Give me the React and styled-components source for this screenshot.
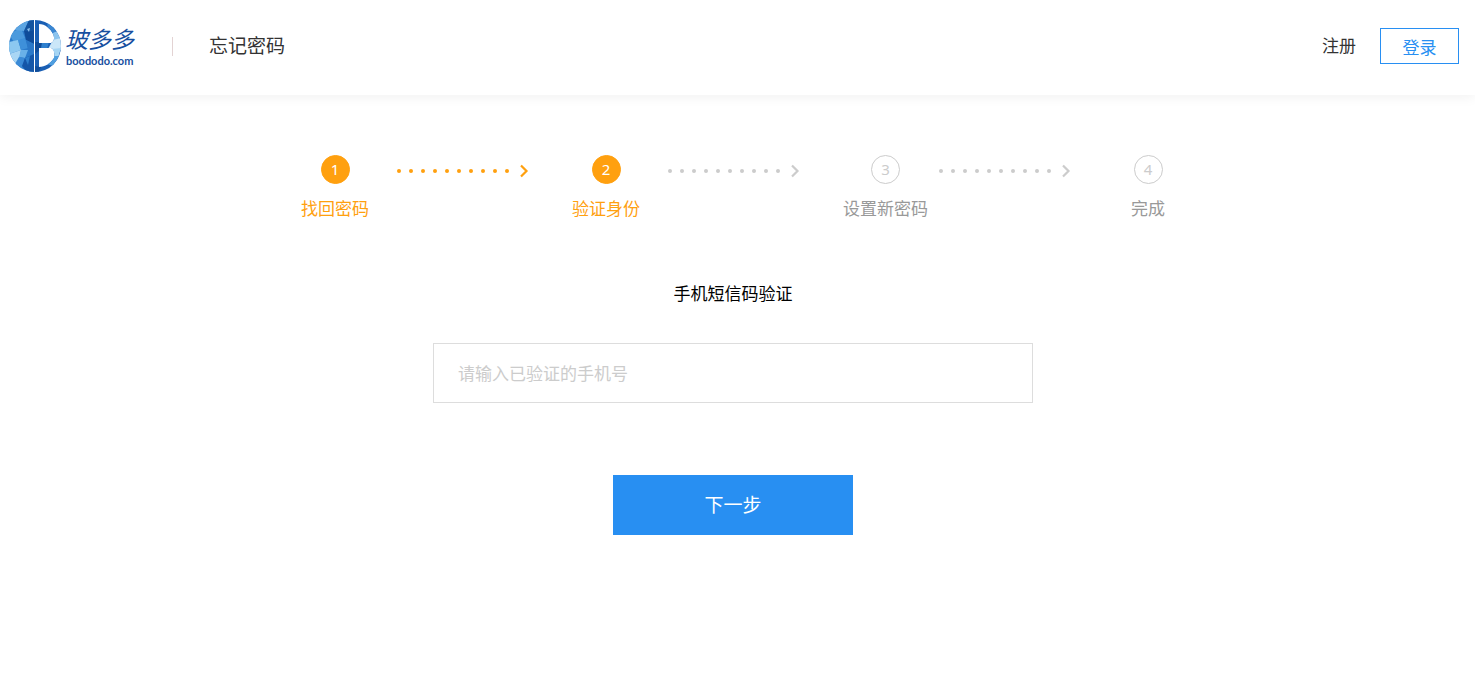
import React, { useState } from 'react'
import styled, { createGlobalStyle } from 'styled-components'


const GlobalStyle = createGlobalStyle`
    * {
        box-sizing: border-box;
    }

    body {
        margin: 0;
        background: #fff;
        color: #000;
        font-family: "Noto Sans", "Noto Sans CJK SC", sans-serif;
        font-size: 17px;
        font-weight: 400;
        line-height: 24px;
    }

    button, input {
        font: inherit;
    }
`

const Header = styled.header`
    display: flex;
    align-items: center;
    height: 95px;
    padding: 0 16px 3px 9px;
    background: #fff;
    box-shadow: 0 2px 12px rgba(0, 0, 0, 0.06);
`

const HomeLink = styled.a`
    display: flex;
`

const Title = styled.h1`
    margin: 0 auto 0 35px;
    padding-left: 37px;
    font-size: 19px;
    font-weight: 400;
    line-height: 24px;
    color: #333;
    background: linear-gradient(#e3d3d3, #e3d3d3) left center / 1px 19px no-repeat;
`

const RegisterLink = styled.a`
    margin-right: 24px;
    color: #333;
    text-decoration: none;
`

const LoginLink = styled.a`
    display: flex;
    align-items: center;
    justify-content: center;
    width: 79px;
    height: 36px;
    padding-top: 3px;
    border: 1px solid #288ff2;
    color: #288ff2;
    text-decoration: none;
`

const Main = styled.main`
    display: flex;
    flex-direction: column;
    align-items: center;
    padding: 60px 9px 0 0;
`

const Steps = styled.ol`
    display: grid;
    grid-template-columns: repeat(3, 271px) 68px;
    margin: 0;
    padding: 0 0 0 17px;
    list-style: none;
`

const StepItem = styled.li`
    display: flex;
    justify-content: space-between;
    padding-right: ${props => props.$last ? 0 : 43}px;
`

const Step = styled.div`
    display: flex;
    flex-direction: column;
    align-items: center;
    gap: 13px;
    min-width: 68px;
    white-space: nowrap;
    color: ${props => props.$active ? '#ffa00f' : '#999'};
`

const StepNumber = styled.span`
    display: flex;
    align-items: center;
    justify-content: center;
    width: 29px;
    height: 29px;
    padding-bottom: 1px;
    border: 1px solid ${props => props.$active ? '#ffa00f' : '#ccc'};
    border-radius: 50%;
    font-size: 15px;
    color: ${props => props.$active ? '#fff' : '#ccc'};
    background: ${props => props.$active ? '#ffa00f' : '#fff'};
`

const ArrowSvg = styled.svg`
    display: block;
    margin-top: 9px;
    color: ${props => props.$active ? '#ffa00f' : '#ccc'};
`

const Form = styled.form`
    display: flex;
    flex-direction: column;
    align-items: center;
    width: 100%;
    max-width: 600px;
    margin-top: 61px;
`

const PhoneLabel = styled.label`
    color: #000;
`

const PhoneInput = styled.input`
    width: 100%;
    height: 60px;
    margin-top: 37px;
    padding: 0 24px;
    border: 1px solid #ddd;
    border-radius: 0;
    outline: none;
    color: #333;

    &::placeholder {
        color: #ccc;
        opacity: 1;
    }
`

const NextButton = styled.button`
    width: 240px;
    height: 60px;
    margin-top: 72px;
    border: 0;
    font-size: 19px;
    color: #fff;
    background: #288ff2;
    cursor: pointer;
`


const Logo = () => (
    <svg width="128" height="52" viewBox="0 0 128 52" role="img" aria-label="玻多多">
        <defs>
            <clipPath id="globe">
                <circle cx="26" cy="26" r="26" />
            </clipPath>
            <clipPath id="letter">
                <path
                    clipRule="evenodd"
                    d="M26 0H52V52H26z
                       M30 4V23H42C45 22 46 18 44 14 42 9 36 4 30 4z
                       M30 28V47C36 47 42 43 45 38 46 33 45 29 42 28z"
                />
            </clipPath>
        </defs>
        <g clipPath="url(#globe)">
            <rect width="25" height="52" fill="#2b7bcb" />
            <path d="M0 14 12 8 16 18 6 24z" fill="#4b9add" />
            <path d="M0 22 9 20 12 30 0 34z" fill="#8cc8f0" />
            <path d="M9 20 16 18 19 28 12 30z" fill="#3e90da" />
            <path d="M5 10 14 2 20 0 15 11z" fill="#5ca5e2" />
            <path d="M15 11 20 0H25V10z" fill="#14549f" />
            <path d="M15 11 25 10V24L17 20z" fill="#0f4c9a" />
            <path d="M18 9 21 8 20 12z" fill="#8cc0ec" />
            <path d="M17 20 25 24V36L19 30z" fill="#2b78c8" />
            <path d="M0 34 12 30 10 42 4 44z" fill="#a9d6f4" />
            <path d="M12 30 19 30 16 38 10 37z" fill="#69b1e8" />
            <path d="M10 37 16 38 13 48 6 44z" fill="#3a8ad6" />
            <path d="M16 38 25 34V52H18L13 46z" fill="#1456a8" />
            <path d="M16 38 21 36 19 45z" fill="#2e80ce" />
            <g clipPath="url(#letter)">
                <rect x="26" width="26" height="52" fill="#1a5fb4" />
                <path d="M26 22 34 22 31 30 26 34z" fill="#0f4c9a" />
                <path d="M33 22 40 22 38 29 32 29z" fill="#2f80ce" />
                <path d="M38 2 47 8 46 15 39 9z" fill="#3a86d2" />
                <path d="M42 14 50 10 52 20 44 22z" fill="#8cc4ee" />
                <path d="M39 29 44 20 52 18V30L46 33z" fill="#cbe7f9" />
                <path d="M43 29 52 28 49 38 44 38z" fill="#a5d5f4" />
                <path d="M44 36 50 36 44 46 38 44z" fill="#4f9fe0" />
                <path d="M26 46 32 47 30 52H26z" fill="#0f4c9a" />
            </g>
        </g>
        <text
            x="56"
            y="28"
            fill="#174f9f"
            fontFamily="'Noto Sans CJK SC', sans-serif"
            fontSize="23"
            fontStyle="italic"
        >
            玻多多
        </text>
        <text
            x="57"
            y="45"
            fill="#174f9f"
            fontFamily="Lato, sans-serif"
            fontSize="11"
            fontWeight="700"
        >
            boododo.com
        </text>
    </svg>
)

const Arrow = ({ active }) => (
    <ArrowSvg $active={active} width="132" height="14" viewBox="0 0 132 14" aria-hidden="true">
        {
            [...Array(10)].map((x, id) => {
                return <circle key={id} cx={2 + id * 12} cy="7" r="2" fill="currentColor" />
            })
        }
        <path d="M124 1.5 129.5 7 124 12.5" fill="none" stroke="currentColor" strokeWidth="2.2" />
    </ArrowSvg>
)


const steps = ['找回密码', '验证身份', '设置新密码', '完成']
const current = 2


const App = () => {
    const [phone, setPhone] = useState('')

    return (
        <>
            <GlobalStyle />
            <Header>
                <HomeLink href="#home">
                    <Logo />
                </HomeLink>
                <Title>忘记密码</Title>
                <RegisterLink href="#register">注册</RegisterLink>
                <LoginLink href="#login">登录</LoginLink>
            </Header>
            <Main>
                <Steps>
                    {
                        steps.map((name, id) => {
                            const last = id === steps.length - 1
                            return (
                                <StepItem key={name} $last={last}>
                                    <Step $active={id < current}>
                                        <StepNumber $active={id < current}>{id + 1}</StepNumber>
                                        {name}
                                    </Step>
                                    {!last && <Arrow active={id + 1 < current} />}
                                </StepItem>
                            )
                        })
                    }
                </Steps>
                <Form onSubmit={(e) => e.preventDefault()}>
                    <PhoneLabel htmlFor="phone">手机短信码验证</PhoneLabel>
                    <PhoneInput
                        id="phone"
                        type="tel"
                        placeholder="请输入已验证的手机号"
                        value={phone}
                        onChange={(e) => setPhone(e.target.value)}
                    />
                    <NextButton type="submit">下一步</NextButton>
                </Form>
            </Main>
        </>
    )
}

export default App
